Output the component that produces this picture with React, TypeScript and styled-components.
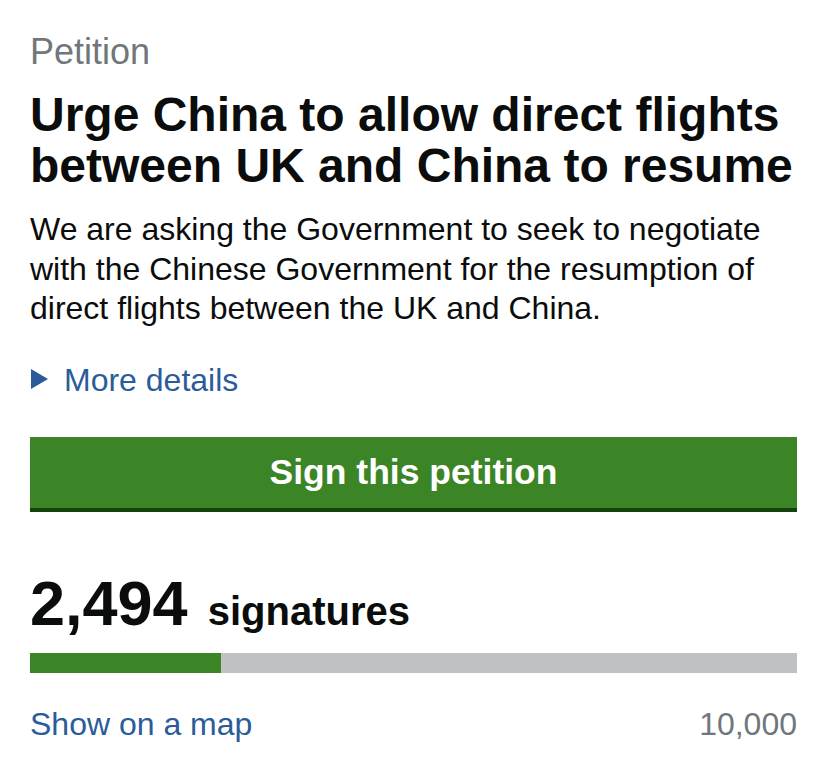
import React from 'react';
import styled, { createGlobalStyle } from 'styled-components';

const GlobalStyle = createGlobalStyle`
  html, body {
    margin: 0;
    padding: 0;
    background: #ffffff;
  }
  body {
    font-family: 'Liberation Sans', Arial, sans-serif;
    color: #0b0c0c;
  }
`;

const SIGNATURES = 2494;
const TARGET = 10000;

export default function App() {
  const pct = (SIGNATURES / TARGET) * 100;

  return (
    <>
      <GlobalStyle />
      <Page>
        <Kicker>Petition</Kicker>
        <Title>Urge China to allow direct flights between UK and China to resume</Title>
        <Summary>
          We are asking the Government to seek to negotiate with the Chinese Government for the
          resumption of direct flights between the UK and China.
        </Summary>
        <Details>
          <Arrow />
          <DetailsLink href="#">More details</DetailsLink>
        </Details>
        <SignButton>Sign this petition</SignButton>
        <Count>
          <Number>{SIGNATURES.toLocaleString('en-GB')}</Number>
          <Label>signatures</Label>
        </Count>
        <Track>
          <Fill style={{ width: `${pct}%` }} />
        </Track>
        <Footer>
          <MapLink href="#">Show on a map</MapLink>
          <Target>{TARGET.toLocaleString('en-GB')}</Target>
        </Footer>
      </Page>
    </>
  );
}

const Page = styled.main`
  width: 767px;
  padding: 32px 31px 0 30px;
  display: flex;
  flex-direction: column;
`;

const Kicker = styled.div`
  font-size: 36px;
  line-height: 40px;
  color: #6f777b;
`;

const Title = styled.h1`
  margin: 17px 0 0;
  font-size: 48px;
  line-height: 51px;
  font-weight: 700;
`;

const Summary = styled.p`
  margin: 19px 0 0;
  font-size: 32px;
  line-height: 39.5px;
`;

const Details = styled.div`
  margin-top: 33px;
  height: 36px;
  display: flex;
  align-items: center;
  gap: 16px;
`;

const Arrow = styled.span`
  width: 0;
  height: 0;
  border-top: 10px solid transparent;
  border-bottom: 10px solid transparent;
  border-left: 17px solid #2b5c9a;
  margin-left: 1px;
  margin-top: -2px;
`;

const DetailsLink = styled.a`
  font-size: 32px;
  line-height: 36px;
  color: #2b5c9a;
  text-decoration: none;
`;

const SignButton = styled.button`
  margin-top: 39px;
  height: 75px;
  width: 100%;
  padding: 0;
  border: none;
  border-bottom: 4px solid #15420b;
  border-radius: 0;
  background: #3c8527;
  color: #ffffff;
  font-family: 'Liberation Sans', Arial, sans-serif;
  font-size: 35.5px;
  font-weight: 700;
  cursor: pointer;
`;

const Count = styled.div`
  margin-top: 58px;
  height: 66px;
  display: flex;
  align-items: baseline;
  gap: 20px;
`;

const Number = styled.span`
  font-size: 63px;
  line-height: 66px;
  font-weight: 700;
`;

const Label = styled.span`
  font-size: 40px;
  font-weight: 700;
`;

const Track = styled.div`
  margin-top: 17px;
  height: 20px;
  background: #bfc1c3;
`;

const Fill = styled.div`
  height: 100%;
  background: #3c8527;
`;

const Footer = styled.div`
  margin-top: 31px;
  display: flex;
  justify-content: space-between;
  align-items: baseline;
  font-size: 32px;
  line-height: 40px;
`;

const MapLink = styled.a`
  color: #2b5c9a;
  text-decoration: none;
`;

const Target = styled.span`
  color: #6f777b;
`;
